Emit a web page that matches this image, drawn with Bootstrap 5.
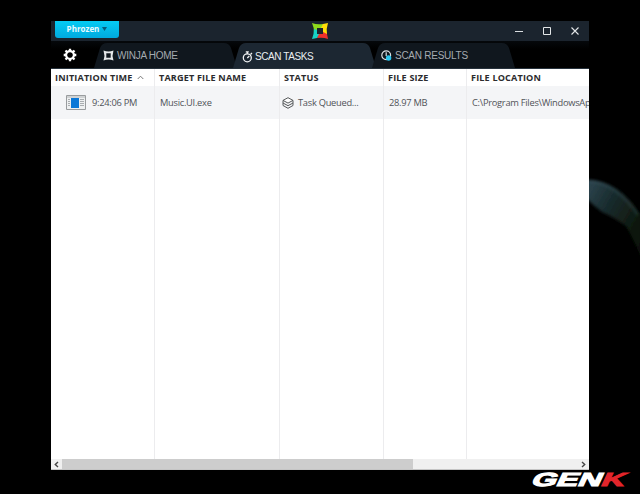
<!DOCTYPE html>
<html lang="en">
<head>
<meta charset="utf-8">
<title>Winja</title>
<link href="https://cdn.jsdelivr.net/npm/bootstrap@5.3.0/dist/css/bootstrap.min.css" rel="stylesheet">
<style>
body{width:640px;height:494px;background:#000;font-family:"Open Sans",sans-serif;line-height:1}
svg{display:block;flex:none}
.desktop{width:640px;height:494px;padding:21px 51px 0}
.app{width:538px;height:449px;background:#fff;z-index:1}
.titlebar{height:20px;background:#1b242e;padding-left:4px}
.brand-btn{width:64px;height:17px;border-radius:0 0 3px 3px;border:0;padding:0 0 1px;background:linear-gradient(#05cbf3,#00aadf);color:#e9faff;font-size:8px;font-weight:700;gap:3px}
.app-logo{margin-left:192px}
.win-btns{gap:20px;padding-right:10px}
.tabstrip{height:28px;background:linear-gradient(#05080b,#000 30%);border-bottom:1px solid #27323c;padding-left:43px}
.tabstrip .gear{margin:0 17px 0 -31px}
.scan-tab{width:143px;height:25px;background:#10171e;color:#a5abb0;font:10px "Liberation Sans",sans-serif;letter-spacing:-.26px;clip-path:path("M0 25 L6 5 Q8 0 13 0 H130 Q135 0 137 5 L143 25Z");gap:3px;padding-left:9px;margin-right:-4px;white-space:nowrap}
.scan-tab.active{background:#1c2732;color:#e9edf0;letter-spacing:-.42px;gap:2px;padding-top:2px}
.cols{display:grid;grid-template-columns:104px 125px 104px 83px 122px}
.cols>div{border-right:1px solid #ececee;overflow:hidden;white-space:nowrap}
.cols>div:last-child{border-right:0}
.head-row{height:17px;font-size:9.1px;font-weight:700;letter-spacing:.16px;color:#2b2b2e}
.head-row>div{padding-left:4px}
.task-row{height:33px;background:#f4f5f7;font-size:9.3px;letter-spacing:-.27px;color:#505358}
.task-row>div{padding-left:5px}
.blank-rows{height:340px}
.hscroll{height:11px;background:#f0f0f0;border-bottom:1px solid #c5c5c5}
.hscroll .thumb{width:351px;background:#cdcdcd}
.hscroll .arrow{width:11px}
.planet{left:589px;top:175px}
.watermark{left:526px;top:466px}
</style>
<script src="https://cdn.jsdelivr.net/npm/bootstrap@5.3.0/dist/js/bootstrap.bundle.min.js"></script>
</head>
<body class="overflow-hidden">
<div class="desktop position-relative">
<svg class="planet position-absolute" width="51" height="95" viewBox="0 0 51 95">
<defs><linearGradient id="sky" x1="0" y1="0" x2="1" y2=".8"><stop offset="0" stop-color="#314954"/><stop offset=".4" stop-color="#182b2d"/><stop offset=".75" stop-color="#101b12"/><stop offset="1" stop-color="#071007"/></linearGradient><filter id="soft"><feGaussianBlur stdDeviation="1.5"/></filter></defs>
<path d="M-4 5Q30 4 53 42V86Q46 66 37 51Q25 42 13 37Q5 31-4 22Z" fill="url(#sky)" filter="url(#soft)"/>
<path d="M0 6Q27 8 49 40" fill="none" stroke="#43606c" stroke-width="2" opacity=".4" filter="url(#soft)"/>
</svg>
<main class="app position-relative overflow-hidden">
<header class="titlebar d-flex align-items-center">
<button class="brand-btn d-flex align-items-center justify-content-center align-self-start">Phrozen<svg width="5" height="4"><path d="M0 0H5L2.5 4Z" fill="#075d7c"/></svg></button>
<svg class="app-logo" width="18" height="18" viewBox="0 0 18 18">
<path d="M1 1Q6 3 12 2V6H6V11H3Q3 5 1 1Z" fill="#8fda1c"/><path d="M12 2L17 1Q15 7 16 12H12V6H10Z" fill="#ffdd08"/><path d="M16 12L17 17Q12 15 6 16L7 12H12V10Z" fill="#ef302b"/><path d="M6 16L1 17Q3 12 3 7L6 8V12H8Z" fill="#16d2c5"/></svg>
<div class="win-btns d-flex align-items-center ms-auto">
<svg width="8" height="8"><path d="M0 4.5H8" stroke="#d9dde0"/></svg>
<svg width="8" height="8"><path d="M.5.5H7.5V7.5H.5Z" fill="none" stroke="#e3e6e8"/></svg>
<svg width="8" height="8"><path d="M.5.5L7.5 7.5M7.5.5L.5 7.5" stroke="#e3e6e8" stroke-width="1.1"/></svg>
</div>
</header>
<nav class="tabstrip d-flex align-items-end">
<svg class="gear align-self-center" width="14" height="14" viewBox="-7 -7 14 14"><g fill="none" stroke="#fff"><circle r="3.9" stroke-width="2.1"/><path d="M0-6.3V-4M0 4V6.3M-6.3 0H-4M4 0H6.3M-4.5-4.5L-3-3M3 3L4.5 4.5M-4.5 4.5L-3 3M3-3L4.5-4.5" stroke-width="2.3"/></g></svg>
<div class="scan-tab d-flex align-items-center"><svg width="11" height="11" viewBox="0 0 11 11"><path d="M.5.5Q5.5 2.3 10.5.5Q8.7 5.5 10.5 10.5Q5.5 8.7.5 10.5Q2.3 5.5.5.5ZM3.3 3.3V7.7H7.7V3.3Z" fill="#e6e8ea" fill-rule="evenodd"/></svg><span>WINJA HOME</span></div>
<div class="scan-tab active d-flex align-items-center"><svg width="11" height="12" viewBox="0 0 11 12"><g fill="none" stroke="#f0f2f4" stroke-width="1.3"><circle cx="5.3" cy="6.8" r="4"/><path d="M3.8.8H6.8M5.3.8V3M8.5 3.5L10 2M5.3 7L7.3 5"/></g></svg><span>SCAN TASKS</span></div>
<div class="scan-tab d-flex align-items-center"><svg width="11" height="11" viewBox="0 0 11 11"><circle cx="5.2" cy="5.2" r="4.4" fill="none" stroke="#dce0e3" stroke-width="1.2"/><path d="M5.2 2.2V6" stroke="#dce0e3" stroke-width="1.2"/><circle cx="7.6" cy="8" r="2.7" fill="#2bc5ed"/></svg><span>SCAN RESULTS</span></div>
</nav>
<section>
<div class="cols head-row">
<div class="d-flex align-items-center">INITIATION TIME<svg class="ms-1" width="7" height="5"><path d="M.7 4L3.5 1.2L6.3 4" fill="none" stroke="#777"/></svg></div>
<div class="d-flex align-items-center">TARGET FILE NAME</div><div class="d-flex align-items-center">STATUS</div><div class="d-flex align-items-center">FILE SIZE</div><div class="d-flex align-items-center">FILE LOCATION</div>
</div>
<div class="cols task-row">
<div class="d-flex align-items-center"><svg width="20" height="15" style="margin:0 6px 0 10px"><path d="M.5.5H19.5V14.5H.5Z" fill="#eef0f1" stroke="#999c9e"/><path d="M1 2H19" stroke="#b1b4b6"/><path d="M5 3H13V13H5Z" fill="#0b78d7"/><path d="M2 4.5H4M2 6.5H4M2 8.5H4M2 10.5H4M14 4.5H18M14 6.5H18M14 8.5H18M14 10.5H18" stroke="#a9adb0"/></svg><span>9:24:06 PM</span></div>
<div class="d-flex align-items-center">Music.UI.exe</div>
<div class="d-flex align-items-center"><svg width="12" height="12" viewBox="0 0 12 12" style="margin:0 4px 0 -3px"><path d="M6 .7L11 3.4L6 6.1L1 3.4Z" fill="#fff" stroke="#55585a"/><path d="M1 3.4V8.5L6 11.3L11 8.5V3.4M1 6L6 8.7L11 6" fill="none" stroke="#55585a"/></svg><span>Task Queued...</span></div>
<div class="d-flex align-items-center">28.97 MB</div><div class="d-flex align-items-center">C:\Program Files\WindowsApps</div>
</div>
<div class="cols blank-rows"><div></div><div></div><div></div><div></div><div></div></div>
</section>
<footer class="hscroll d-flex">
<div class="arrow d-flex align-items-center justify-content-center"><svg width="5" height="7"><path d="M4 1L1.3 3.5L4 6" fill="none" stroke="#444" stroke-width="1.4"/></svg></div><div class="thumb"></div>
<div class="arrow ms-auto d-flex align-items-center justify-content-center"><svg width="5" height="7"><path d="M1 1L3.7 3.5L1 6" fill="none" stroke="#444" stroke-width="1.4"/></svg></div>
</footer>
</main>
<svg class="watermark position-absolute" width="110" height="26" viewBox="0 0 110 26"><g transform="translate(4 20.3) skewX(-25)"><text font-family="Liberation Sans, sans-serif" font-size="19" font-weight="700" fill="#fff" stroke="#fff" stroke-width="1.1" textLength="93" lengthAdjust="spacingAndGlyphs">GEN<tspan fill="#e2252b" stroke="#e2252b">K</tspan></text></g></svg>
</div>
</body>
</html>
